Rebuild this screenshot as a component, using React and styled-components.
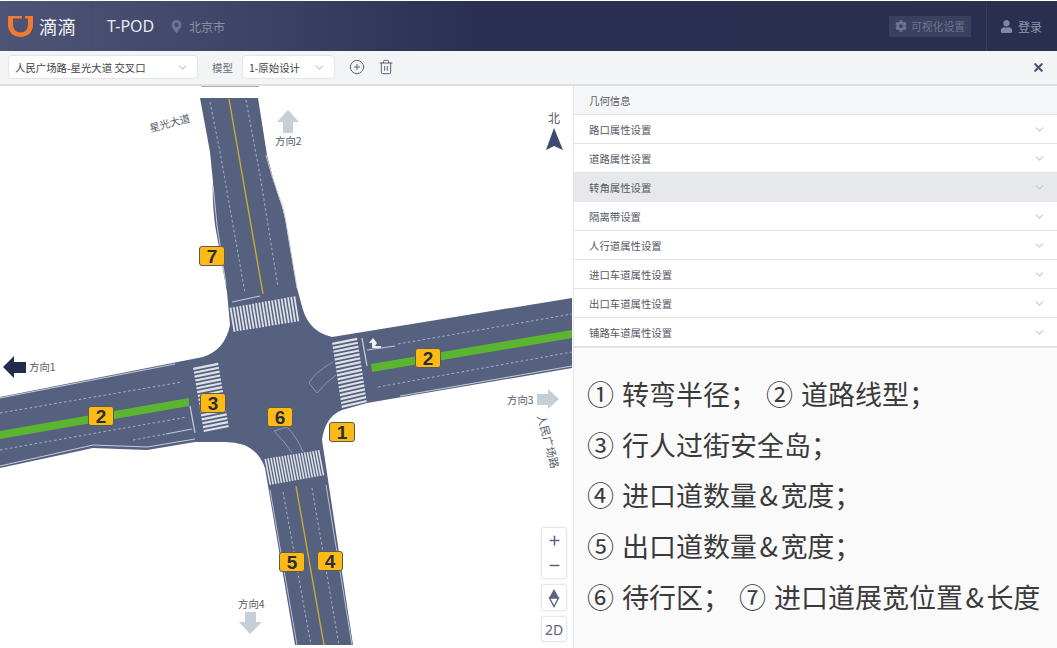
import React from 'react';
import styled, { createGlobalStyle } from 'styled-components';
import { ChevronDown, CirclePlus, Trash2, X, Plus, Minus } from 'lucide-react';
import { FaCog, FaMapMarkerAlt, FaUser } from 'react-icons/fa';

const GlobalStyle = createGlobalStyle`
	html, body {
		margin: 0;
		padding: 0;
		background: #fff;
	}
	body {
		font-family: "Noto Sans CJK SC", "Noto Sans", sans-serif;
		overflow: hidden;
	}
`;

const Page = styled.div`
	width: 1057px;
	height: 648px;
	display: flex;
	flex-direction: column;
	overflow: hidden;
`;

const Header = styled.header`
	height: 50px;
	margin-top: 1px;
	flex: none;
	display: flex;
	align-items: center;
	background: linear-gradient(90deg, #4d5475 0%, #3f4566 22%, #2b3052 45%, #2a2f50 100%);
`;

const Logo = styled.div`
	display: flex;
	align-items: center;
	gap: 5px;
	width: 92px;
	padding-left: 7px;
	box-sizing: border-box;
	color: #f1f2f5;
	font-size: 18.5px;
	svg {
		flex: none;
	}
`;

const HeaderRule = styled.div`
	width: 1px;
	height: 50px;
	background: #454a69;
`;

const Product = styled.div`
	margin-left: 14px;
	color: #e8eaf0;
	font-family: "Noto Sans", sans-serif;
	font-size: 16px;
	width: 49px;
	white-space: nowrap;
`;

const City = styled.div`
	margin-left: 14px;
	display: flex;
	align-items: center;
	gap: 6px;
	color: #8a90a8;
	font-size: 12px;
	svg {
		color: #6d7492;
		font-size: 13px;
	}
`;

const HeaderRight = styled.div`
	margin-left: auto;
	display: flex;
	align-items: center;
	height: 100%;
`;

const SettingsButton = styled.div`
	width: 82px;
	height: 21px;
	display: flex;
	align-items: center;
	justify-content: center;
	gap: 4px;
	background: #3b405e;
	color: #6f7591;
	font-size: 10.8px;
	svg {
		font-size: 12px;
	}
`;

const Login = styled.div`
	margin-left: 15px;
	width: 71px;
	height: 100%;
	padding-left: 13px;
	box-sizing: border-box;
	border-left: 1px solid #383d5c;
	display: flex;
	align-items: center;
	gap: 5px;
	color: #9298ae;
	font-size: 12px;
	svg {
		font-size: 13px;
		color: #7f88a4;
	}
`;

const Toolbar = styled.div`
	height: 35px;
	flex: none;
	box-sizing: border-box;
	display: flex;
	align-items: center;
	padding: 0 12px 1px 8px;
	background: #f3f4f6;
	border-bottom: 2px solid #dedfe3;
`;

const Select = styled.div`
	width: ${(p) => p.$width}px;
	height: 24px;
	box-sizing: border-box;
	display: flex;
	align-items: center;
	justify-content: space-between;
	padding: 0 8px 0 6px;
	background: #fff;
	border: 1px solid #e4e5e9;
	border-radius: 4px;
	color: #3d3f47;
	font-size: 10.4px;
	white-space: nowrap;
	svg {
		color: #c4c7ce;
	}
`;

const ToolLabel = styled.span`
	margin: 0 9px 0 14px;
	color: #6a6d76;
	font-size: 10.5px;
`;

const ToolIcons = styled.div`
	display: flex;
	align-items: center;
	gap: 13px;
	margin-left: 14px;
	color: #5c6380;
`;

const CloseButton = styled.div`
	margin-left: auto;
	display: flex;
	color: #4d5570;
`;

const Body = styled.main`
	flex: 1;
	display: flex;
	min-height: 0;
`;

const MapCanvas = styled.section`
	position: relative;
	width: 573px;
	flex: none;
	background: #fff;
	overflow: hidden;
	svg.roads {
		display: block;
	}
`;

const ActiveTab = styled.div`
	position: absolute;
	left: 201px;
	top: 0;
	width: 58px;
	height: 1px;
	background: #a7aebf;
`;

const Badge = styled.div`
	position: absolute;
	left: ${(p) => p.$x}px;
	top: ${(p) => p.$y - 86}px;
	width: 26px;
	height: 20px;
	box-sizing: border-box;
	display: flex;
	align-items: center;
	justify-content: center;
	background: #fdba14;
	border: 1px solid #5b5a55;
	border-radius: 3px;
	color: #2b2d38;
	font-family: "Liberation Sans", sans-serif;
	font-size: 19px;
	font-weight: 700;
	line-height: 1;
`;

const MapLabel = styled.div`
	position: absolute;
	left: ${(p) => p.$x}px;
	top: ${(p) => p.$y - 86}px;
	color: #555a68;
	font-size: ${(p) => p.$size || 10.4}px;
	line-height: 1;
	white-space: nowrap;
	transform: rotate(${(p) => p.$rotate || 0}deg);
	transform-origin: center;
`;

const ControlGroup = styled.div`
	position: absolute;
	left: 541px;
	top: ${(p) => p.$y - 86}px;
	width: 26px;
	height: ${(p) => p.$height}px;
	box-sizing: border-box;
	display: flex;
	flex-direction: column;
	align-items: center;
	justify-content: space-around;
	background: #fff;
	border: 1px solid #e6e7eb;
	border-radius: 3px;
	box-shadow: 0 0 2px rgba(60, 70, 100, 0.12);
	color: #5a6480;
	font-family: "Noto Sans", sans-serif;
	font-size: 14px;
`;

const SidePanel = styled.aside`
	flex: 1;
	display: flex;
	flex-direction: column;
	border-left: 1px solid #e4e5e9;
	background: #fafafa;
`;

const PanelTitle = styled.div`
	height: 29px;
	box-sizing: border-box;
	display: flex;
	align-items: center;
	padding-left: 15px;
	background: #f5f6f8;
	border-bottom: 1px solid #e2e3e7;
	color: #5a5d66;
	font-size: 10.4px;
`;

const PanelRow = styled.div`
	height: 29px;
	box-sizing: border-box;
	display: flex;
	align-items: center;
	justify-content: space-between;
	padding: 0 11px 0 15px;
	background: ${(p) => (p.$active ? '#e6e8ec' : '#fff')};
	border-bottom: 1px solid #e2e3e7;
	color: #55585f;
	font-size: 10.4px;
	svg {
		color: #c6c9d0;
	}
`;

const Notes = styled.div`
	flex: 1;
	padding: 21px 0 0 13px;
	border-top: 1px solid #e2e3e7;
	color: #3a3a3c;
	font-size: 27px;
`;

const NoteLine = styled.div`
	height: 50.7px;
	line-height: 50.7px;
	display: flex;
	white-space: nowrap;
`;

const NoteItem = styled.span`
	display: flex;
	& + & {
		margin-left: 9px;
	}
`;

const NoteNumber = styled.span`
	width: 35px;
	flex: none;
`;

const Ampersand = styled.span`
	padding: 0 2.5px;
`;

const rows = ['路口属性设置', '道路属性设置', '转角属性设置', '隔离带设置', '人行道属性设置', '进口车道属性设置', '出口车道属性设置', '铺路车道属性设置'];

const notes = [
	[['①', '转弯半径；'], ['②', '道路线型；']],
	[['③', '行人过街安全岛；']],
	[['④', '进口道数量', '宽度；']],
	[['⑤', '出口道数量', '宽度；']],
	[['⑥', '待行区；'], ['⑦', '进口道展宽位置', '长度']],
];

const badges = [
	{ n: 7, x: 199, y: 246 },
	{ n: 2, x: 88, y: 406 },
	{ n: 2, x: 415, y: 348 },
	{ n: 3, x: 200, y: 393 },
	{ n: 6, x: 267, y: 407 },
	{ n: 1, x: 329, y: 422 },
	{ n: 5, x: 279, y: 552 },
	{ n: 4, x: 317, y: 551 },
];

const labels = [
	{ text: '方向1', x: 29, y: 362 },
	{ text: '方向2', x: 275, y: 136 },
	{ text: '方向3', x: 507, y: 395 },
	{ text: '方向4', x: 238, y: 599 },
	{ text: '星光大道', x: 149, y: 118, rotate: -15 },
	{ text: '人民广场路', x: 521, y: 436, rotate: 75, size: 11 },
	{ text: '北', x: 548, y: 112, size: 12 },
];

const ROAD =
	'M200,98 L258,98 L267,155 Q272,175 277,192 Q282,205 285,218 L297,288 L303,310 Q310,332 332,337 L572,298 L572,368 L367,403 L342,410 Q325,417 322,440 L353,645 L295,645 L265,468 Q256,441 223,442 L195,442 L147,450 L93,448 L0,468 L0,397 L203,357 Q225,350 230,325 L227,292 L215,225 Q212,200 213,182 L210,152 Z';

// four corners: a-b is the side the stripes are spread along, d-c the opposite one
const Crosswalk = ({ a, b, c, d, count }) => {
	const lerp = (p, q, t) => [p[0] + (q[0] - p[0]) * t, p[1] + (q[1] - p[1]) * t];
	const stripes = [];
	for (let i = 0; i < count; i++) {
		const t1 = (i + 0.2) / count;
		const t2 = (i + 0.75) / count;
		const pts = [lerp(a, b, t1), lerp(a, b, t2), lerp(d, c, t2), lerp(d, c, t1)];
		stripes.push(<polygon key={i} points={pts.map((p) => p.join(',')).join(' ')} fill="#dfe2e9" />);
	}
	return <g>{stripes}</g>;
};

const Line = ({ d, color = '#aab1c3', width = 1, dash }) => (
	<path d={d} fill="none" stroke={color} strokeWidth={width} strokeDasharray={dash} />
);

const EDGE = '#c6cbd8';

const RoadMap = () => (
	<svg className="roads" width="573" height="562" viewBox="0 86 573 562">
		<path d={ROAD} fill="#566180" />

		<Crosswalk a={[229, 308]} b={[296, 296]} c={[300, 321]} d={[233, 332]} count={21} />
		<Crosswalk a={[332, 342]} b={[342, 409]} c={[367, 403]} d={[357, 337]} count={17} />
		<Crosswalk a={[193, 367]} b={[204, 433]} c={[229, 428]} d={[218, 362]} count={17} />
		<Crosswalk a={[264, 459]} b={[320, 450]} c={[325, 475]} d={[269, 485]} count={20} />

		{/* north arm */}
		<Line d="M229,99 L263,294" color="#c9a83c" width={1.4} />
		<Line d="M210,102 L220,152 L245,293" dash="2.5 2.5" />
		<Line d="M246,100 L260,175 L278,287" dash="2.5 2.5" />
		<Line d="M213,185 Q215,205 217,225 L226,285" color={EDGE} />
		<Line d="M266,155 Q272,178 279,196 Q284,208 286,222 L297,288" color={EDGE} />
		<Line d="M232,302 L260,296" color={EDGE} />

		{/* east arm */}
		<polygon points="371,364 572,330 572,338 372,372" fill="#5cb531" />
		<Line d="M398,344 L572,314" dash="2.5 2.5" />
		<Line d="M378,387 L572,352" dash="2.5 2.5" />
		<Line d="M367,350 L395,346" color={EDGE} />
		<Line d="M362,338 L367,366" color={EDGE} width={1.3} />
		<Line d="M400,396 L572,366" color={EDGE} />
		<path d="M372,348 L372,343 L369,343 L373,338 L377,343 L375,346 L381,346 L381,348 Z" fill="#f0f1f4" />

		{/* west arm */}
		<polygon points="0,431 189,398 189,406 0,439" fill="#5cb531" />
		<Line d="M0,413 L182,382" dash="2.5 2.5" />
		<Line d="M0,450 L187,417" dash="2.5 2.5" />
		<Line d="M133,440 L166,434" dash="2.5 2.5" />
		<Line d="M166,434 L192,429" color={EDGE} />
		<Line d="M190,406 L195,433" color={EDGE} width={1.3} />
		<Line d="M0,398 L175,364" color={EDGE} />
		<Line d="M0,466 L93,445 L147,447 L195,439" color={EDGE} />

		{/* south arm */}
		<Line d="M296,486 L324,645" color="#c9a83c" width={1.4} />
		<Line d="M283,492 L311,645" dash="2.5 2.5" />
		<Line d="M312,488 L339,645" dash="2.5 2.5" />
		<Line d="M270,490 L297,645" color="#b9bfce" />
		<Line d="M326,485 L352,645" color="#b9bfce" />

		{/* turn guides in the junction */}
		<Line d="M287,427 L274,431 Q285,442 292,453 M287,427 Q297,437 303,452" color="#8f97ac" />
		<Line d="M333,362 Q315,372 309,383 L317,393 Q325,383 336,375" color="#8f97ac" />

		{/* direction arrows */}
		<polygon points="288,110 299,122 293,122 293,133 283,133 283,122 277,122" fill="#c6ced8" />
		<polygon points="3,367 14,356 14,362 26,362 26,373 14,373 14,378" fill="#252b4d" />
		<polygon points="559,399 548,389 548,394 537,394 537,405 548,405 548,409" fill="#c6ced8" />
		<polygon points="250,634 239,622 245,622 245,612 256,612 256,622 262,622" fill="#c6ced8" />

		{/* north needle */}
		<polygon points="554,128 563,150 554,146 546,150" fill="#3e4a6f" />
	</svg>
);

const DidiLogo = () => (
	<svg width="27" height="24" viewBox="0 0 27 24">
		<path
			fillRule="evenodd"
			d="M1,2 H15 V4.5 H6 V10 C6,15 9,18.5 13.5,18.5 C18,18.5 21,15 21,10 V4.5 H18 V2 H26 V11 C26,18 20.5,23 13.5,23 C6.5,23 1,18 1,11 Z"
			fill="#ef7a32"
		/>
	</svg>
);

const App = () => (
	<Page>
		<GlobalStyle />
		<Header>
			<Logo>
				<DidiLogo />
				<span>滴滴</span>
			</Logo>
			<HeaderRule />
			<Product>T-POD</Product>
			<City>
				<FaMapMarkerAlt />
				北京市
			</City>
			<HeaderRight>
				<SettingsButton>
					<FaCog />
					可视化设置
				</SettingsButton>
				<Login>
					<FaUser />
					登录
				</Login>
			</HeaderRight>
		</Header>

		<Toolbar>
			<Select $width={190}>
				人民广场路-星光大道 交叉口
				<ChevronDown size={13} />
			</Select>
			<ToolLabel>模型</ToolLabel>
			<Select $width={93}>
				1-原始设计
				<ChevronDown size={13} />
			</Select>
			<ToolIcons>
				<CirclePlus size={16} strokeWidth={1.5} />
				<Trash2 size={16} strokeWidth={1.5} />
			</ToolIcons>
			<CloseButton>
				<X size={13} strokeWidth={4} />
			</CloseButton>
		</Toolbar>

		<Body>
			<MapCanvas>
				<ActiveTab />
				<RoadMap />
				{labels.map((l) => (
					<MapLabel key={l.text} $x={l.x} $y={l.y} $rotate={l.rotate} $size={l.size}>
						{l.text}
					</MapLabel>
				))}
				{badges.map((b) => (
					<Badge key={`${b.n}-${b.x}`} $x={b.x} $y={b.y}>
						{b.n}
					</Badge>
				))}
				<ControlGroup $y={527} $height={52}>
					<Plus size={15} strokeWidth={2.4} />
					<Minus size={15} strokeWidth={2.4} />
				</ControlGroup>
				<ControlGroup $y={584} $height={27}>
					<svg width="12" height="20" viewBox="0 0 12 20">
						<path d="M6,1 L11,10 H1 Z" fill="#5a6480" />
						<path d="M1.5,10 H10.5 L6,18.5 Z" fill="#fff" stroke="#5a6480" strokeWidth="1.4" />
					</svg>
				</ControlGroup>
				<ControlGroup $y={616} $height={26}>2D</ControlGroup>
			</MapCanvas>

			<SidePanel>
				<PanelTitle>几何信息</PanelTitle>
				{rows.map((r) => (
					<PanelRow key={r} $active={r === '转角属性设置'}>
						{r}
						<ChevronDown size={13} />
					</PanelRow>
				))}
				<Notes>
					{notes.map((line) => (
						<NoteLine key={line[0][0]}>
							{line.map(([num, text, rest]) => (
								<NoteItem key={num}>
									<NoteNumber>{num}</NoteNumber>
									{text}
									{rest && <Ampersand>&amp;</Ampersand>}
									{rest}
								</NoteItem>
							))}
						</NoteLine>
					))}
				</Notes>
			</SidePanel>
		</Body>
	</Page>
);

export default App;
